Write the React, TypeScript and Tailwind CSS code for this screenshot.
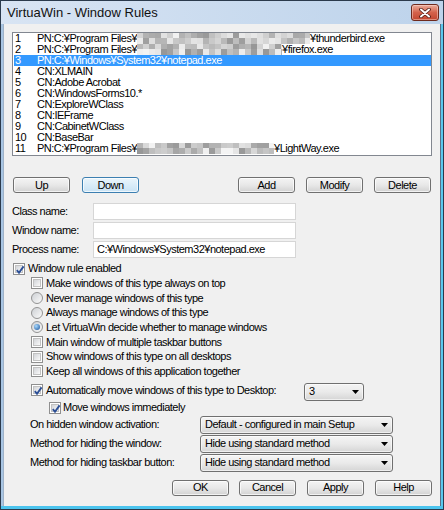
import React from "react";

type Row = { n: string; pre: string; blur?: number; post?: string; seed?: number; sel?: boolean };

const rows: Row[] = [
  { n: "1", pre: "PN:C:¥Program Files¥", blur: 173, post: "¥thunderbird.exe", seed: 11 },
  { n: "2", pre: "PN:C:¥Program Files¥", blur: 145, post: "¥firefox.exe", seed: 29 },
  { n: "3", pre: "PN:C:¥Windows¥System32¥notepad.exe", sel: true },
  { n: "4", pre: "CN:XLMAIN" },
  { n: "5", pre: "CN:Adobe Acrobat" },
  { n: "6", pre: "CN:WindowsForms10.*" },
  { n: "7", pre: "CN:ExploreWClass" },
  { n: "8", pre: "CN:IEFrame" },
  { n: "9", pre: "CN:CabinetWClass" },
  { n: "10", pre: "CN:BaseBar" },
  { n: "11", pre: "PN:C:¥Program Files¥", blur: 137, post: "¥LightWay.exe", seed: 53 },
];

// pixelated grey blocks standing in for the blurred path names
function mosaic(seed: number, width: number) {
  let s = seed;
  const rnd = () => {
    s = (s * 9301 + 49297) % 233280;
    return s / 233280;
  };
  const shade = () => {
    const g = Math.round(150 + rnd() * 95);
    return `rgb(${g},${g},${g})`;
  };
  return Array.from({ length: Math.ceil(width / 6) }, () => [shade(), shade()]);
}

function Blur({ seed, width }: { seed: number; width: number }) {
  return (
    <span className="flex h-[11px] shrink-0 overflow-hidden" style={{ width }}>
      {mosaic(seed, width).map(([a, b], i) => (
        <span key={i} className="flex w-[6px] shrink-0 flex-col">
          <span className="h-[5px]" style={{ background: a }} />
          <span className="h-[6px]" style={{ background: b }} />
        </span>
      ))}
    </span>
  );
}

function CheckBox({ checked = false }: { checked?: boolean }) {
  return (
    <span className="relative flex h-[12px] w-[12px] shrink-0 border border-[#8f8f8f] bg-white p-[1px]">
      <span className="h-full w-full border border-[#c2c2c2] bg-linear-to-br from-[#d2d4d8] to-[#fafafa]" />
      {checked && (
        <svg className="absolute left-[1px] top-[1px]" width="10" height="10" viewBox="0 0 10 10">
          <path d="M1.8 5.2 L4 7.8 L8.6 1.4" fill="none" stroke="#2c4f96" strokeWidth="1.9" />
        </svg>
      )}
    </span>
  );
}

function Radio({ checked = false }: { checked?: boolean }) {
  return (
    <span className="flex h-[12px] w-[12px] shrink-0 items-center justify-center rounded-full border border-[#939393] bg-linear-to-br from-[#cdd0d4] to-[#fbfbfb]">
      {checked && (
        <span className="h-[6px] w-[6px] rounded-full bg-radial-[at_35%_35%] from-[#a9dbff] to-[#174f98]" />
      )}
    </span>
  );
}

function Btn({ label, className = "", active = false }: { label: string; className?: string; active?: boolean }) {
  return (
    <div
      className={`flex h-[16px] w-[57px] shrink-0 items-center justify-center rounded-[3px] border shadow-[inset_0_0_0_1px_rgba(255,255,255,0.7)] ${
        active
          ? "border-[#3c7fb1] bg-linear-to-b from-[#eaf5fc] to-[#c9e3f5]"
          : "border-[#707070] bg-linear-to-b from-[#f4f4f4] via-[#e8e8e8] to-[#d2d2d2]"
      } ${className}`}
    >
      {label}
    </div>
  );
}

function Drop({ value, className = "" }: { value: string; className?: string }) {
  return (
    <div
      className={`flex h-[18px] shrink-0 items-center justify-between rounded-[3px] border border-[#707070] bg-linear-to-b from-[#f4f4f4] via-[#eaeaea] to-[#d5d5d5] pl-[4px] pr-[4px] shadow-[inset_0_0_0_1px_rgba(255,255,255,0.6)] ${className}`}
    >
      <span className="whitespace-pre">{value}</span>
      <svg width="7" height="4" viewBox="0 0 7 4">
        <path d="M0 0H7L3.5 4Z" fill="#000" />
      </svg>
    </div>
  );
}

function Opt({ children, label, className = "" }: { children: React.ReactNode; label: string; className?: string }) {
  return (
    <div className={`flex h-[14.7px] items-center gap-[3px] ${className}`}>
      {children}
      <span className="whitespace-pre">{label}</span>
    </div>
  );
}

export default function App() {
  return (
    <div className="flex h-[510px] w-[444px] flex-col border border-[#2b3a4c] bg-linear-to-r from-[#d8e4f3] to-[#bdd3eb] font-['Liberation_Sans',Arial,sans-serif] text-[11px] leading-[11px] tracking-[-0.5px] text-black">
      {/* title bar */}
      <div className="flex h-[23px] shrink-0 items-start justify-between pl-[6px] pr-[4px]">
        <span className="mt-[4px] text-[13px] leading-[15px] tracking-normal text-[#111]">VirtuaWin - Window Rules</span>
        <div className="mt-[3px] flex h-[17px] w-[28px] items-center justify-center rounded-[3px] border border-[#6e2a1d] bg-linear-to-b from-[#e9ac9c] via-[#d4624b] to-[#c2452f] shadow-[inset_0_0_0_1px_rgba(255,230,220,0.45)]">
          <svg width="12" height="10" viewBox="0 0 12 10">
            <path d="M2 1.5 L10 8.5 M10 1.5 L2 8.5" stroke="#4a1a12" strokeWidth="3.6" strokeLinecap="round" />
            <path d="M2 1.5 L10 8.5 M10 1.5 L2 8.5" stroke="#fff" strokeWidth="2" strokeLinecap="round" />
          </svg>
        </div>
      </div>

      <div className="flex min-h-0 flex-1">
        <div className="w-[2px] shrink-0 bg-[#a8c5e3]" />
        <div className="flex w-[437px] shrink-0 flex-col items-start border-l border-[#9fb2c8] bg-[#f0f0f0]">
          {/* rules list */}
          <div className="ml-[8px] mt-[8px] h-[124px] w-[420px] shrink-0 border border-[#828790] bg-white pl-[1px]">
            {rows.map((r) => (
              <div
                key={r.n}
                className={`flex h-[11px] items-center whitespace-pre pl-[1px] ${r.sel ? "bg-[#3399ff] text-white" : ""}`}
              >
                <span className="w-[22px] shrink-0">{r.n}</span>
                <span>{r.pre}</span>
                {r.blur && <Blur seed={r.seed ?? 1} width={r.blur} />}
                {r.post && <span>{r.post}</span>}
              </div>
            ))}
          </div>

          {/* list buttons */}
          <div className="mt-[21px] flex">
            <Btn label="Up" className="ml-[9px]" />
            <Btn label="Down" className="ml-[12px]" active />
            <Btn label="Add" className="ml-[99px]" />
            <Btn label="Modify" className="ml-[11px]" />
            <Btn label="Delete" className="ml-[11px]" />
          </div>

          {/* name fields */}
          <div className="mt-[10px] flex flex-col gap-[2px]">
            {[
              ["Class name:", ""],
              ["Window name:", ""],
              ["Process name:", "C:¥Windows¥System32¥notepad.exe"],
            ].map(([l, v]) => (
              <div key={l} className="flex h-[17px] items-center">
                <span className="ml-[8px] w-[81px] shrink-0">{l}</span>
                <div className="flex h-[17px] w-[203px] items-center border border-[#d6d6d6] bg-white pl-[3px]">{v}</div>
              </div>
            ))}
          </div>

          <Opt label="Window rule enabled" className="ml-[9px] mt-[3px] h-[15px]">
            <CheckBox checked />
          </Opt>
          <div className="ml-[27px] flex flex-col">
            <Opt label="Make windows of this type always on top">
              <CheckBox />
            </Opt>
            <Opt label="Never manage windows of this type">
              <Radio />
            </Opt>
            <Opt label="Always manage windows of this type">
              <Radio />
            </Opt>
            <Opt label="Let VirtuaWin decide whether to manage windows">
              <Radio checked />
            </Opt>
            <Opt label="Main window of multiple taskbar buttons">
              <CheckBox />
            </Opt>
            <Opt label="Show windows of this type on all desktops">
              <CheckBox />
            </Opt>
            <Opt label="Keep all windows of this application together">
              <CheckBox />
            </Opt>
          </div>

          <div className="ml-[27px] mt-[4px] flex h-[18px] items-center">
            <div className="mb-[3px] flex w-[273px] items-center gap-[3px]">
              <CheckBox checked />
              <span className="whitespace-pre">Automatically move windows of this type to Desktop:</span>
            </div>
            <Drop value="3" className="w-[60px]" />
          </div>
          <div className="ml-[45px] flex h-[14px] items-center gap-[2px]">
            <CheckBox checked />
            <span>Move windows immediately</span>
          </div>

          <div className="mt-[1px] flex flex-col gap-[1px]">
            {[
              ["On hidden window activation:", "Default - configured in main Setup"],
              ["Method for hiding the window:", "Hide using standard method"],
              ["Method for hiding taskbar button:", "Hide using standard method"],
            ].map(([l, v]) => (
              <div key={l} className="flex h-[18px] items-center">
                <span className="ml-[26px] w-[170px] shrink-0 whitespace-pre">{l}</span>
                <Drop value={v} className="w-[193px]" />
              </div>
            ))}
          </div>

          <div className="mt-[8px] flex">
            <Btn label="OK" className="ml-[168px] w-[56px]" />
            <Btn label="Cancel" className="ml-[10px]" />
            <Btn label="Apply" className="ml-[11px]" />
            <Btn label="Help" className="ml-[11px]" />
          </div>
        </div>
        <div className="w-[1px] shrink-0 bg-[#5b6f86]" />
        <div className="w-[2px] shrink-0 bg-[#5ac8ee]" />
      </div>
      <div className="h-[3px] shrink-0 bg-[#4cc4ee]" />
    </div>
  );
}
